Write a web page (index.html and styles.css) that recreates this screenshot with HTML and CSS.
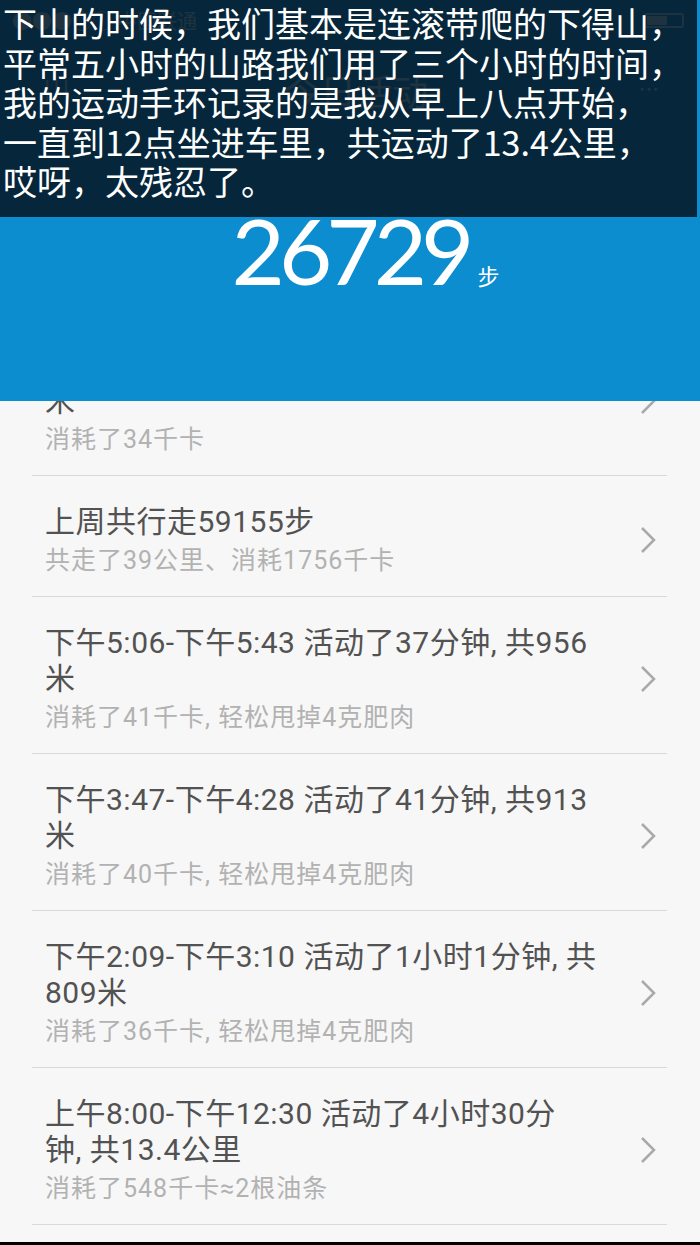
FILE: index.html
```html
<!DOCTYPE html>
<html>
  <head>
    <meta charset="utf-8" />
    <title>今日活动</title>
    <link rel="stylesheet" href="styles.css">
  </head>
  <body>
    <div class="phone">
      <header class="top">
        <div class="statusbar">
          <span class="signal">●●●○○ 中国联通</span>
          <span class="battery"><span class="battery-level"></span></span>
        </div>
        <div class="toolbar">
          <span class="bars">|||</span>
          <h1>今日活动</h1>
          <span class="more">•••</span>
        </div>
        <div class="count">
          <span class="steps">26729</span>
          <span class="unit">步</span>
        </div>
      </header>

      <!-- caption laid over the screenshot -->
      <div class="caption">
        下山的时候，我们基本是连滚带爬的下得山，<br>
        平常五小时的山路我们用了三个小时的时间，<br>
        我的运动手环记录的是我从早上八点开始，<br>
        一直到12点坐进车里，共运动了13.4公里，<br>
        哎呀，太残忍了。
      </div>

      <ul class="list">
        <li class="item">
          <div class="text">
            <div class="title">下午6:02-下午6:35 活动了33分钟, 共826<br>米</div>
            <div class="sub">消耗了34千卡</div>
          </div>
          <svg class="chevron" width="18" height="28" viewBox="0 0 18 28"><polyline points="3,2 15,14 3,26" /></svg>
        </li>
        <li class="item">
          <div class="text">
            <div class="title">上周共行走59155步</div>
            <div class="sub">共走了39公里、消耗1756千卡</div>
          </div>
          <svg class="chevron" width="18" height="28" viewBox="0 0 18 28"><polyline points="3,2 15,14 3,26" /></svg>
        </li>
        <li class="item">
          <div class="text">
            <div class="title">下午5:06-下午5:43 活动了37分钟, 共956<br>米</div>
            <div class="sub">消耗了41千卡, 轻松甩掉4克肥肉</div>
          </div>
          <svg class="chevron" width="18" height="28" viewBox="0 0 18 28"><polyline points="3,2 15,14 3,26" /></svg>
        </li>
        <li class="item">
          <div class="text">
            <div class="title">下午3:47-下午4:28 活动了41分钟, 共913<br>米</div>
            <div class="sub">消耗了40千卡, 轻松甩掉4克肥肉</div>
          </div>
          <svg class="chevron" width="18" height="28" viewBox="0 0 18 28"><polyline points="3,2 15,14 3,26" /></svg>
        </li>
        <li class="item">
          <div class="text">
            <div class="title">下午2:09-下午3:10 活动了1小时1分钟, 共<br>809米</div>
            <div class="sub">消耗了36千卡, 轻松甩掉4克肥肉</div>
          </div>
          <svg class="chevron" width="18" height="28" viewBox="0 0 18 28"><polyline points="3,2 15,14 3,26" /></svg>
        </li>
        <li class="item">
          <div class="text">
            <div class="title">上午8:00-下午12:30 活动了4小时30分<br>钟, 共13.4公里</div>
            <div class="sub">消耗了548千卡≈2根油条</div>
          </div>
          <svg class="chevron" width="18" height="28" viewBox="0 0 18 28"><polyline points="3,2 15,14 3,26" /></svg>
        </li>
      </ul>
    </div>
  </body>
</html>
```

FILE: styles.css
```css
  * {
    margin: 0;
    padding: 0;
    box-sizing: border-box;
  }
  body {
    background-color: #000;
    font-family: Roboto, "Noto Sans CJK SC", sans-serif;
  }
  .phone {
    position: relative;
    width: 700px;
    height: 1242px;
    overflow: hidden;
    background-color: #f7f7f7;
  }

  /* blue header */
  .top {
    position: relative;
    z-index: 1;
    height: 401px;
    background-color: #0b8dcf;
    color: #fff;
  }
  .statusbar {
    height: 40px;
    display: flex;
    align-items: center;
    justify-content: space-between;
    padding: 0 16px 0 12px;
    font-size: 20px;
  }
  .battery {
    width: 40px;
    height: 15px;
    border: 2px solid #fff;
    border-radius: 3px;
    padding: 1px;
  }
  .battery-level {
    display: block;
    width: 60%;
    height: 100%;
    background-color: #fff;
  }
  .toolbar {
    height: 100px;
    display: flex;
    align-items: center;
    justify-content: space-between;
    padding: 0 40px 0 44px;
  }
  .toolbar h1 {
    font-family: "Noto Sans CJK SC", sans-serif;
    font-weight: normal;
    font-size: 36px;
  }
  .bars {
    font-size: 26px;
    letter-spacing: 3px;
  }
  .more {
    font-size: 14px;
    letter-spacing: 2px;
  }
  .count {
    display: flex;
    justify-content: center;
    align-items: baseline;
    padding-top: 75px;
  }
  .steps {
    font-family: Lato, sans-serif;
    font-weight: 400;
    font-size: 92px;
    line-height: 70px;
    letter-spacing: -6px;
  }
  .unit {
    font-family: "Noto Sans CJK SC", sans-serif;
    font-size: 22px;
    margin-left: 9px;
    margin-right: -31px;
  }

  /* dark caption box */
  .caption {
    position: absolute;
    z-index: 2;
    top: 0;
    left: 0;
    width: 697px;
    height: 217px;
    padding: 3px 0 0 3px;
    background-color: rgba(6, 28, 42, 0.9);
    color: #fff;
    font-family: "Noto Sans CJK SC", sans-serif;
    font-size: 34px;
    line-height: 39.5px;
    white-space: nowrap;
  }

  /* activity list */
  .list {
    list-style-type: none;
    margin-top: -82px;
  }
  .item {
    display: flex;
    align-items: center;
    margin: 0 33px 0 32px;
    padding: 28px 10px 20px 13px;
    border-bottom: 1px solid #dadada;
  }
  .text {
    flex: 1;
  }
  .title {
    color: #525252;
    font-size: 30px;
    line-height: 36px;
    letter-spacing: 0.5px;
    white-space: nowrap;
  }
  .sub {
    margin-top: 6px;
    color: #b2b2b2;
    font-size: 25px;
    line-height: 30px;
    letter-spacing: 1px;
  }
  .chevron polyline {
    fill: none;
    stroke: #a9a9a9;
    stroke-width: 2.5;
  }
```
